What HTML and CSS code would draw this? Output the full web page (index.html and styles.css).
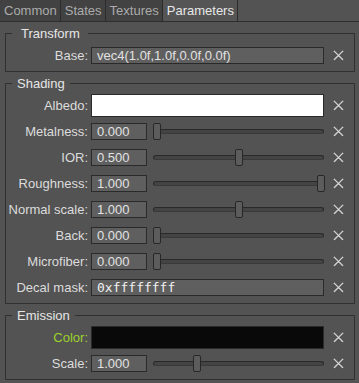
FILE: index.html
```html
<!DOCTYPE html>
<html lang="en">
<head>
    <meta charset="UTF-8">
    <title>Material parameters</title>
    <link rel="stylesheet" href="styles.css">
</head>
<body>
    <div class="tabs">
        <div class="tab">Common</div>
        <div class="tab">States</div>
        <div class="tab">Textures</div>
        <div class="tab active">Parameters</div>
    </div>

    <fieldset class="group">
        <legend class="title title-wide">Transform</legend>
        <div class="row">
            <label>Base:</label>
            <div class="field"><div class="input">vec4(1.0f,1.0f,0.0f,0.0f)</div></div>
            <div class="clear"><svg viewBox="0 0 11 11"><path class="shadow" d="M1.5 2L9.5 10M9.5 2L1.5 10"/><path class="cross" d="M1 1L10 10M10 1L1 10"/></svg></div>
        </div>
    </fieldset>

    <fieldset class="group">
        <legend class="title">Shading</legend>
        <div class="row">
            <label>Albedo:</label>
            <div class="field"><div class="swatch white"></div></div>
            <div class="clear"><svg viewBox="0 0 11 11"><path class="shadow" d="M1.5 2L9.5 10M9.5 2L1.5 10"/><path class="cross" d="M1 1L10 10M10 1L1 10"/></svg></div>
        </div>
        <div class="row">
            <label>Metalness:</label>
            <div class="field"><div class="input short">0.000</div><div class="slider"><div class="handle" style="left: 0px"></div></div></div>
            <div class="clear"><svg viewBox="0 0 11 11"><path class="shadow" d="M1.5 2L9.5 10M9.5 2L1.5 10"/><path class="cross" d="M1 1L10 10M10 1L1 10"/></svg></div>
        </div>
        <div class="row">
            <label>IOR:</label>
            <div class="field"><div class="input short">0.500</div><div class="slider"><div class="handle" style="left: 82px"></div></div></div>
            <div class="clear"><svg viewBox="0 0 11 11"><path class="shadow" d="M1.5 2L9.5 10M9.5 2L1.5 10"/><path class="cross" d="M1 1L10 10M10 1L1 10"/></svg></div>
        </div>
        <div class="row">
            <label>Roughness:</label>
            <div class="field"><div class="input short">1.000</div><div class="slider"><div class="handle" style="left: 164px"></div></div></div>
            <div class="clear"><svg viewBox="0 0 11 11"><path class="shadow" d="M1.5 2L9.5 10M9.5 2L1.5 10"/><path class="cross" d="M1 1L10 10M10 1L1 10"/></svg></div>
        </div>
        <div class="row">
            <label>Normal scale:</label>
            <div class="field"><div class="input short">1.000</div><div class="slider"><div class="handle" style="left: 82px"></div></div></div>
            <div class="clear"><svg viewBox="0 0 11 11"><path class="shadow" d="M1.5 2L9.5 10M9.5 2L1.5 10"/><path class="cross" d="M1 1L10 10M10 1L1 10"/></svg></div>
        </div>
        <div class="row">
            <label>Back:</label>
            <div class="field"><div class="input short">0.000</div><div class="slider"><div class="handle" style="left: 0px"></div></div></div>
            <div class="clear"><svg viewBox="0 0 11 11"><path class="shadow" d="M1.5 2L9.5 10M9.5 2L1.5 10"/><path class="cross" d="M1 1L10 10M10 1L1 10"/></svg></div>
        </div>
        <div class="row">
            <label>Microfiber:</label>
            <div class="field"><div class="input short">0.000</div><div class="slider"><div class="handle" style="left: 0px"></div></div></div>
            <div class="clear"><svg viewBox="0 0 11 11"><path class="shadow" d="M1.5 2L9.5 10M9.5 2L1.5 10"/><path class="cross" d="M1 1L10 10M10 1L1 10"/></svg></div>
        </div>
        <div class="row">
            <label>Decal mask:</label>
            <div class="field"><div class="input mono">0xffffffff</div></div>
            <div class="clear"><svg viewBox="0 0 11 11"><path class="shadow" d="M1.5 2L9.5 10M9.5 2L1.5 10"/><path class="cross" d="M1 1L10 10M10 1L1 10"/></svg></div>
        </div>
    </fieldset>

    <fieldset class="group">
        <legend class="title">Emission</legend>
        <div class="row">
            <label class="accent">Color:</label>
            <div class="field"><div class="swatch black"></div></div>
            <div class="clear"><svg viewBox="0 0 11 11"><path class="shadow" d="M1.5 2L9.5 10M9.5 2L1.5 10"/><path class="cross" d="M1 1L10 10M10 1L1 10"/></svg></div>
        </div>
        <div class="row">
            <label>Scale:</label>
            <div class="field"><div class="input short">1.000</div><div class="slider"><div class="handle" style="left: 40px"></div></div></div>
            <div class="clear"><svg viewBox="0 0 11 11"><path class="shadow" d="M1.5 2L9.5 10M9.5 2L1.5 10"/><path class="cross" d="M1 1L10 10M10 1L1 10"/></svg></div>
        </div>
    </fieldset>
</body>
</html>
```

FILE: styles.css
```css
/* page */
body {
    margin: 0;
    background-color: #535353;
    color: #dcdcdc;
    font-family: "Liberation Sans", Arial, sans-serif;
    font-size: 13px;
}

/* tab bar */
.tabs {
    display: flex;
    height: 21px;
    border-bottom: 1px solid #2e2e2e;
}

.tab {
    padding: 0 3px 0 4px;
    line-height: 22px;
    background-color: #424242;
    color: #ababab;
    border-right: 1px solid #2c2c2c;
}

.tab.active {
    background-color: #555555;
    color: #e8e8e8;
}

/* group boxes */
.group {
    margin: 4px 4px 0 5px;
    padding: 3px 0 4px 0;
    border: 1px solid #303030;
    min-width: 0;
}

.group + .group {
    margin-top: 4px;
}

.title {
    margin-left: 6px;
    padding: 0 5px;
    line-height: 15px;
    color: #e6e6e6;
}

.title-wide {
    padding: 0 8px 0 9px;
}

/* rows */
.row {
    display: grid;
    grid-template-columns: 82px 233px 1fr;
    column-gap: 3px;
    height: 23px;
    align-items: center;
    margin-top: 3px;
}

.row:first-of-type {
    margin-top: 0;
}

.row label {
    text-align: right;
    white-space: nowrap;
}

.row label.accent {
    color: #9cd22c;
}

.field {
    display: flex;
    align-items: center;
    gap: 6px;
    height: 100%;
}

.input {
    flex: 1;
    height: 17px;
    box-sizing: border-box;
    padding: 0 5px;
    line-height: 15px;
    background-color: #5f5f5f;
    border: 1px solid #2a2a2a;
    color: #e2e2e2;
    white-space: nowrap;
    overflow: hidden;
}

.input.short {
    flex: 0 0 56px;
}

.input.mono {
    font-family: "DejaVu Sans Mono", monospace;
    font-size: 13px;
    color: #f0f0f0;
}

.swatch {
    flex: 1;
    height: 23px;
    box-sizing: border-box;
    border: 1px solid #2a2a2a;
}

.swatch.white { background-color: #ffffff; }
.swatch.black { background-color: #090909; }

/* slider */
.slider {
    flex: 1;
    height: 17px;
    position: relative;
}

.slider::before {
    content: "";
    position: absolute;
    left: 0;
    right: 0;
    top: 6px;
    height: 5px;
    box-sizing: border-box;
    border-radius: 3px;
    border: 1px solid #2a2a2a;
    border-bottom-color: #3a3a3a;
    background-color: #444444;
}

.handle {
    position: absolute;
    top: 0;
    width: 8px;
    height: 17px;
    box-sizing: border-box;
    border: 1px solid #272727;
    border-radius: 2px;
    background-color: #5c5c5c;
}

/* clear button */
.clear {
    display: flex;
    justify-content: flex-start;
}

.clear svg {
    width: 11px;
    height: 11px;
    margin-left: 6px;
}

.clear .shadow {
    stroke: #333333;
    stroke-width: 1.6;
    fill: none;
}

.clear .cross {
    stroke: #e4e4e4;
    stroke-width: 1.6;
    stroke-dasharray: 1.1 0.3;
    fill: none;
}
```
